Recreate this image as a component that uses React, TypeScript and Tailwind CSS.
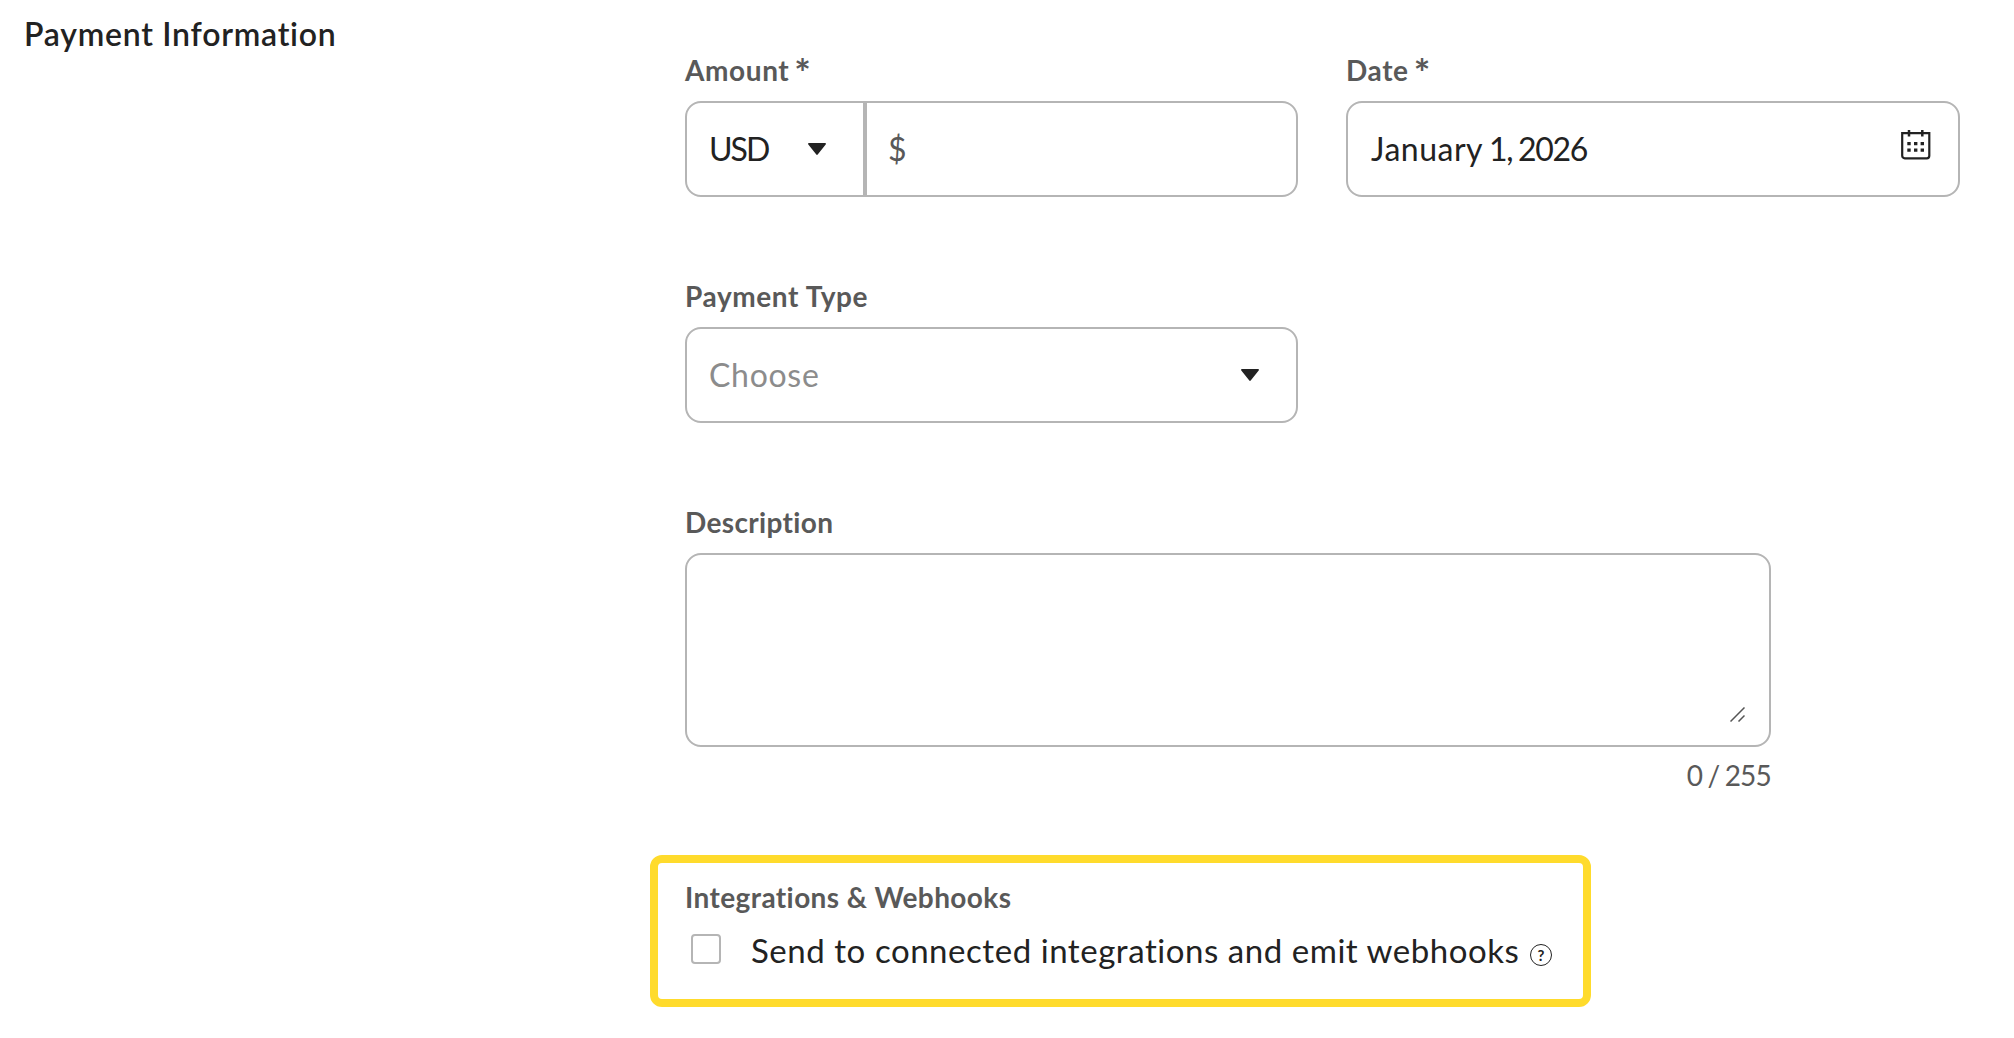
import type React from "react";
import { useState } from "react";

const MAX_DESCRIPTION = 255;

const CaretIcon: React.FC = () => (
  <svg width="18" height="12" viewBox="0 0 18 12" fill="#222" className="shrink-0">
    <path d="M1 0h16c.9 0 1.300.9.7 1.500L9.700 11.500c-.4.500-1 .5-1.400 0L.3 1.500C-.3.900.1 0 1 0z" />
  </svg>
);

const CalendarIcon: React.FC = () => (
  <svg width="30" height="30" viewBox="0 0 30 30" fill="none" className="shrink-0">
    <path d="M1.200 3.200h27.100v22.600a2.500 2.500 0 0 1-2.500 2.500H3.700a2.500 2.500 0 0 1-2.500-2.500z" stroke="#222" strokeWidth="2.200" />
    <path d="M8 0v6.500M21.300 0v6.500" stroke="#222" strokeWidth="2.500" />
    <path
      d="M6.300 12h3.400v3.200H6.300zM13 12h3.400v3.200H13zM19.600 12H23v3.200h-3.400zM6.300 18.500h3.400v3.200H6.300zM13 18.500h3.400v3.200H13zM19.600 18.500H23v3.200h-3.400z"
      fill="#222"
    />
  </svg>
);

const ResizeIcon: React.FC = () => (
  <svg width="15" height="15" viewBox="0 0 15 15" stroke="#555" strokeWidth="1.500" fill="none">
    <path d="M.5 14.500l14-14M8.500 14.500l6-6" />
  </svg>
);

interface FieldProps {
  label: string;
  required?: boolean;
  tracking?: string;
  className?: string;
  children: React.ReactNode;
}

const Field: React.FC<FieldProps> = ({ label, required, tracking, className, children }) => (
  <div className={`flex flex-col ${className || ""}`}>
    <div className="mb-[11px] h-10 text-[28px] leading-10 font-bold whitespace-nowrap text-[#595959]">
      <span className={tracking || ""}>{label}</span>
      {required && <span className="ml-[5px] align-[-6px] text-[39px] leading-none">*</span>}
    </div>
    {children}
  </div>
);

export default function App() {
  const [amount, setAmount] = useState("");
  const [description, setDescription] = useState("");
  const [sendWebhooks, setSendWebhooks] = useState(false);

  return (
    <div className="flex h-[1038px] w-[2014px] overflow-hidden bg-white font-['Lato',sans-serif] text-[32px] leading-10 text-[#222]">
      <div className="w-[685px] shrink-0 pt-[14px] pl-6">
        <h2 className="font-semibold whitespace-nowrap">
          <span className="tracking-[0.75px]">Payment Information</span>
        </h2>
      </div>

      <div className="flex flex-col pt-[50px]">
        <div className="flex gap-12">
          <Field label="Amount" required tracking="tracking-[0.6px]" className="w-[613px]">
            <div className="flex h-24 rounded-2xl border-2 border-[#b5b5b5]">
              <button className="flex w-[180px] items-center justify-between border-r-4 border-[#b5b5b5] pr-[37px] pl-[22px]">
                <span className="tracking-[-2px]">USD</span>
                <CaretIcon />
              </button>
              <label className="flex min-w-0 flex-1 items-center pl-[21px]">
                <span className="text-[#595959]">$</span>
                <input
                  className="min-w-0 flex-1 px-2 outline-none"
                  value={amount}
                  onChange={(e) => setAmount(e.target.value)}
                />
              </label>
            </div>
          </Field>
          <Field label="Date" required tracking="tracking-[0.6px]" className="w-[614px]">
            <button className="flex h-24 items-center justify-between rounded-2xl border-2 border-[#b5b5b5] pr-[27px] pl-[23px]">
              <span className="tracking-[-1.300px] [word-spacing:-1px]">
                <span className="tracking-[0.5px]">January</span> 1, 2026
              </span>
              <span className="pb-2">
                <CalendarIcon />
              </span>
            </button>
          </Field>
        </div>

        <Field label="Payment Type" tracking="tracking-[0.6px]" className="mt-[79px] w-[613px]">
          <button className="flex h-24 items-center justify-between rounded-2xl border-2 border-[#b5b5b5] pr-[37px] pb-px pl-[22px]">
            <span className="tracking-[0.7px] text-[#8c8c8c]">Choose</span>
            <CaretIcon />
          </button>
        </Field>

        <Field label="Description" tracking="tracking-[0.35px]" className="mt-[79px] w-[1086px]">
          <div className="relative flex h-[194px] rounded-2xl border-2 border-[#b5b5b5]">
            <textarea
              className="flex-1 resize-none p-5 outline-none"
              maxLength={MAX_DESCRIPTION}
              value={description}
              onChange={(e) => setDescription(e.target.value)}
            />
            <span className="pointer-events-none absolute right-6 bottom-[23px]">
              <ResizeIcon />
            </span>
          </div>
          <div className="mt-2 text-right text-[28px] text-[#595959]">
            <span className="tracking-[-0.8px] [word-spacing:-1px]">
              {description.length} / {MAX_DESCRIPTION}
            </span>
          </div>
        </Field>

        <div className="mt-[60px] -ml-[35px] h-[152px] w-[941px] rounded-xl border-8 border-[#ffdb2c] pt-[14px] pl-[27px]">
          <div className="text-[28px] font-bold whitespace-nowrap text-[#595959]">
            <span className="tracking-[0.4px]">Integrations &amp; Webhooks</span>
          </div>
          <label className="mt-[14px] flex whitespace-nowrap">
            <input
              type="checkbox"
              className="mt-[3px] mr-[30px] ml-[6px] size-[30px] shrink-0 appearance-none rounded border-2 border-[#b5b5b5] checked:bg-[#222]"
              checked={sendWebhooks}
              onChange={(e) => setSendWebhooks(e.target.checked)}
            />
            <span className="-mt-px w-[779px]">
              <span className="text-[33px] tracking-[0.55px]">Send to connected integrations and emit webhooks</span>
            </span>
            <span className="mt-[13px] flex size-[22px] items-center justify-center rounded-full border-[1.500px] border-[#222] text-[15px] leading-none font-bold">
              ?
            </span>
          </label>
        </div>
      </div>
    </div>
  );
}
